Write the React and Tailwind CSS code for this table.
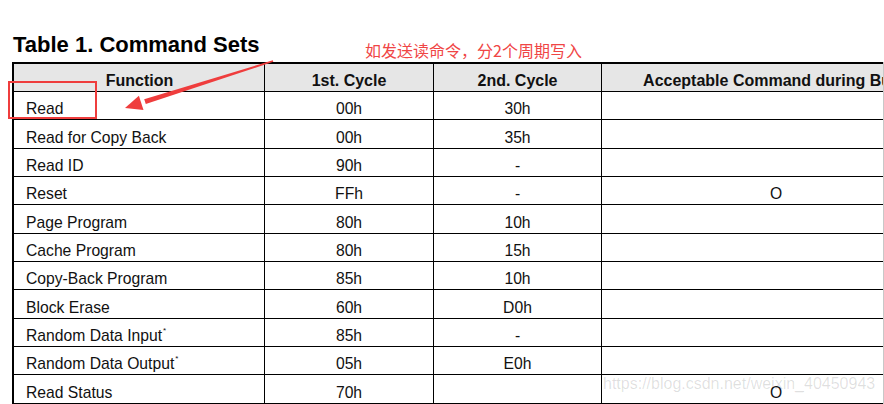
const rows = [
  ["Read", "00h", "30h", ""],
  ["Read for Copy Back", "00h", "35h", ""],
  ["Read ID", "90h", "-", ""],
  ["Reset", "FFh", "-", "O"],
  ["Page Program", "80h", "10h", ""],
  ["Cache Program", "80h", "15h", ""],
  ["Copy-Back Program", "85h", "10h", ""],
  ["Block Erase", "60h", "D0h", ""],
  ["Random Data Input", "85h", "-", "", true],
  ["Random Data Output", "05h", "E0h", "", true],
  ["Read Status", "70h", "", "O"],
];

function Row({ cells, header }) {
  const [a, b, c, d, star] = cells;
  const h = header ? "h-[28px] bg-[#e6e6e6] font-bold text-[16px]" : "h-[28.33px]";
  const p = header ? "pt-[6px]" : "pt-[7px]";
  return (
    <div className={`flex border-b border-black ${h}`}>
      <div className={`w-[251px] shrink-0 flex items-center border-r border-black ${p} ${header ? "justify-center pl-[1px]" : "pl-[12px]"}`}>
        <span>{a}</span>
        {star && <span className="text-[8px] leading-none self-center -mt-[10px] ml-[1px]">*</span>}
      </div>
      <div className={`w-[169px] shrink-0 flex items-center justify-center border-r border-black ${p}`}>{b}</div>
      <div className={`w-[168px] shrink-0 flex items-center justify-center border-r border-black ${p}`}>{c}</div>
      <div className={`w-[348px] shrink-0 flex items-center justify-center whitespace-nowrap ${p}`}>{d}</div>
    </div>
  );
}

export default function App() {
  return (
    <div className="relative w-[884px] h-[404px] overflow-hidden bg-white text-[#111] font-['Liberation_Sans',Arial,sans-serif]">
      <div className="flex h-full">
        <div className="w-[883px] shrink-0 overflow-hidden">
          <div className="h-[62px] pt-[34px] pl-[13px] text-[22px] leading-none font-bold text-black whitespace-nowrap">
            Table 1. Command Sets
          </div>
          <div className="ml-[12px] w-[940px] border-l-2 border-t-2 border-black text-[15.7px] leading-none">
            <Row header cells={["Function", "1st. Cycle", "2nd. Cycle", "Acceptable Command during Busy"]} />
            {rows.map((r, i) => (
              <Row key={i} cells={r} />
            ))}
          </div>
        </div>
        <div className="w-px mt-[62px] bg-[#c8c8c8]" />
      </div>

      <div className="absolute left-[8px] top-[81px] w-[89px] h-[38px] border-2 border-[#ef3d3d]" />
      <svg className="absolute left-0 top-0 pointer-events-none" width="884" height="404" viewBox="0 0 884 404">
        <polygon points="272.8,60.3 273.3,61.8 145.8,104 144.2,99.2" fill="#ef3d3d" />
        <polygon points="125,108 138.9,95.7 143.5,110" fill="#ef3d3d" />
      </svg>
      <div className="absolute left-[365px] top-[42px] text-[16px] leading-none text-[#f04545] font-['Noto_Sans_CJK_SC',sans-serif] whitespace-nowrap">
        如发送读命令，分2个周期写入
      </div>
      <div className="absolute left-[603px] top-[376px] text-[16px] leading-none text-[rgba(0,0,0,0.13)] whitespace-nowrap">
        https://blog.csdn.net/weixin_40450943
      </div>
    </div>
  );
}
